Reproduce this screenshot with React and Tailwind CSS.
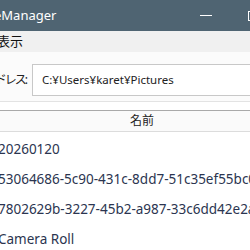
import React from 'react';

const rows = [
  '20260120',
  '53064686-5c90-431c-8dd7-51c35ef55bc0',
  '7802629b-3227-45b2-a987-33c6dd42e2a1',
  'Camera Roll',
];

const App = () => {
  return (
    <div
      className="w-[250px] h-[250px] overflow-hidden bg-white flex flex-col"
      style={{ fontFamily: '"Noto Sans", "Noto Sans CJK JP", sans-serif' }}
    >
      {/* Title bar */}
      <div className="h-[31px] shrink-0 bg-[#4f6472] flex items-center text-white text-[13px]">
        <span className="ml-[-6px] whitespace-nowrap">eManager</span>
        <div className="flex-1" />
        <div className="w-[12px] h-[1px] bg-white mr-[36px]" />
        <div className="w-[10px] h-[10px] border border-white mr-[-8px]" />
      </div>

      {/* Menu bar */}
      <div className="h-[21px] shrink-0 bg-[#f0f0f0] flex items-center text-[13px] text-[#111]">
        <span className="ml-[-3px]">表示</span>
      </div>

      {/* Address row */}
      <div className="h-[50px] shrink-0 bg-[#fbfbfb] border-b border-[#e3e3e3] flex items-center pt-[6px]">
        <div className="w-[32px] shrink-0 overflow-hidden flex justify-end">
          <span className="text-[12px] text-[#222] whitespace-nowrap tracking-[-2px] pr-[6px]">アドレス:</span>
        </div>
        <div className="flex-1 mr-[-10px] h-[32px] bg-white border border-[#c8c8c8] flex items-center pl-[9px] text-[11.5px] text-[#222] whitespace-nowrap">
          C:¥Users¥karet¥Pictures
        </div>
      </div>

      <div className="h-[8px] shrink-0 bg-white" />

      {/* List header */}
      <div className="h-[22px] shrink-0 bg-[#fafafa] border-t border-[#a9a9a9] border-b border-b-[#dcdcdc] flex items-center justify-center text-[12px] text-[#222]">
        <span className="ml-[34px]">名前</span>
      </div>

      {/* Rows */}
      <div className="flex flex-col pt-[2px]">
        {rows.map((r) => (
          <div
            key={r}
            className="h-[30px] flex items-center text-[13.5px] text-[#2b3550] whitespace-nowrap"
          >
            <span className="ml-[-2px]">{r}</span>
          </div>
        ))}
      </div>
    </div>
  );
};

export default App;
